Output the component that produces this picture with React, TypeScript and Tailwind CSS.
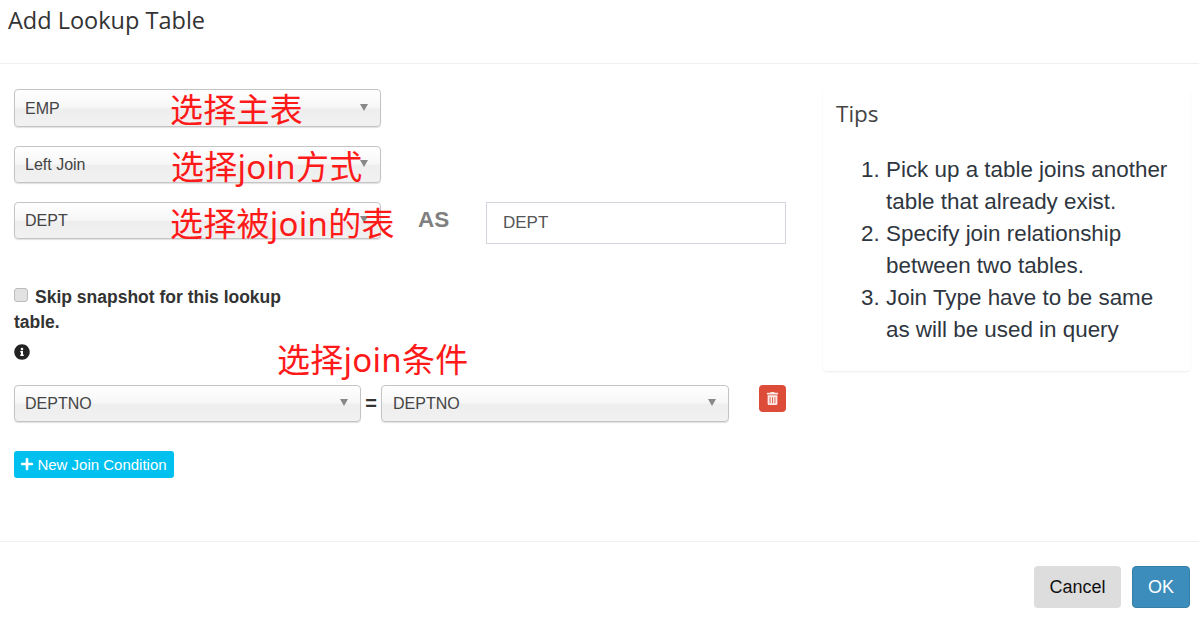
import React from 'react';
import { FaInfoCircle, FaPlus, FaTrashAlt } from 'react-icons/fa';

const SelectBox: React.FC<{ label: string; className: string; note?: string; noteClass?: string }> = ({ label, className, note, noteClass }) => (
  <div className={`relative flex items-center justify-between rounded-[4px] border border-[#c4c4c4] bg-[linear-gradient(to_bottom,#ffffff_0%,#f7f7f7_47%,#eeeeee_53%,#f1f1f1_100%)] shadow-[0_1px_1px_rgba(0,0,0,0.12)] pl-[10px] pr-[12px] text-[16px] text-[#444] ${className}`}>
    <span className="mt-[1px]">{label}</span>
    <span className="-mt-[2px] h-0 w-0 border-x-[4.5px] border-t-[7px] border-x-transparent border-t-[#888]"></span>
    {note && <span className={`absolute whitespace-nowrap text-[#ff1a1a] ${noteClass}`}>{note}</span>}
  </div>
);

const noteFont = "font-['Noto_Sans','Noto_Sans_CJK_SC',sans-serif] text-[33px] leading-none tracking-[0.25px]";

export default function App() {
  return (
    <div className="flex h-[617px] w-[1199px] flex-col overflow-hidden bg-white font-['Liberation_Sans',sans-serif] text-[#333]">
      {/* Header */}
      <div className="h-[64px] flex-none border-b border-[#f0f0f0] pl-2 pt-[4px]">
        <h4 className="font-['Open_Sans',sans-serif] text-[23.5px] leading-[32px] text-[#333]">Add Lookup Table</h4>
      </div>

      {/* Body */}
      <div className="flex h-[478px] flex-none border-b border-[#f0f0f0] pl-[14px] pr-[9px] pt-[25px]">
        <div className="w-[772px] flex-none">
          <SelectBox label="EMP" className="h-[38px] w-[367px]" note="选择主表" noteClass={`left-[155px] top-[3px] ${noteFont}`} />
          <SelectBox label="Left Join" className="mt-[19px] h-[37px] w-[367px]" note="选择join方式" noteClass={`left-[156px] top-[3px] ${noteFont}`} />
          <div className="mt-[19px] flex items-start">
            <SelectBox label="DEPT" className="h-[37px] w-[367px]" note="选择被join的表" noteClass={`left-[155px] top-[4px] ${noteFont}`} />
            <div className="ml-[37px] mt-[5px] w-[68px] text-[22.5px] font-bold leading-[26px] text-[#808080]">AS</div>
            <div className="flex h-[42px] w-[300px] items-center border border-[#d2d6de] pl-[16px] text-[17px] text-[#555]">DEPT</div>
          </div>

          <div className="relative mt-[41px] w-[280px] text-[17.5px] font-bold leading-[25px] text-[#333]">
            <input type="checkbox" readOnly className="mr-[7px] inline-block h-[14px] w-[14px] appearance-none rounded-[3px] border border-[#bbb] bg-[#e2e2e2] align-[1px]" />
            Skip snapshot for this lookup table.
          </div>
          <div className="mt-[8px] flex h-[42px] items-start text-[16px] text-[#222]">
            <FaInfoCircle className="mt-[1px]" />
          </div>

          <div className="flex items-start">
            <SelectBox label="DEPTNO" className="h-[37px] w-[347px]" note="选择join条件" noteClass={`left-[262px] -top-[43px] ${noteFont}`} />
            <div className="w-[20px] pt-[5px] text-center text-[20px] font-bold leading-[26px]">=</div>
            <SelectBox label="DEPTNO" className="h-[37px] w-[348px] pl-[11px]" />
            <button className="ml-[30px] flex h-[27px] w-[27px] items-center justify-center rounded-[4px] bg-[#dd4b39] text-[13px] text-[#fbe9e6]">
              <FaTrashAlt />
            </button>
          </div>

          <button className="mt-[29px] flex h-[27px] w-[160px] items-center justify-center gap-[3px] rounded-[3px] bg-[#00c0ef] pb-[1px] text-[15px] text-white">
            <FaPlus className="-ml-[1px] text-[14px]" />
            <span className="mt-[2px]">New Join Condition</span>
          </button>
        </div>

        {/* Tips card */}
        <div className="ml-[37px] h-[282px] w-[367px] flex-none rounded-[4px] bg-white pl-[13px] pt-[9px] shadow-[0_1px_2px_rgba(0,0,0,0.08)]">
          <h4 className="font-['Open_Sans',sans-serif] text-[22.5px] leading-[32px] text-[#444]">Tips</h4>
          <ol className="mt-[24px] list-decimal pl-[50px] pr-[12px] text-[22.4px] leading-[32px] text-[#2f3640]">
            <li>Pick up a table joins another table that already exist.</li>
            <li>Specify join relationship between two tables.</li>
            <li>Join Type have to be same as will be used in query</li>
          </ol>
        </div>
      </div>

      {/* Footer */}
      <div className="flex flex-1 items-start justify-end gap-[11px] pr-[9px] pt-[24px] text-[18px]">
        <button className="h-[42px] w-[87px] rounded-[4px] bg-[#dddddd] text-[#111]">Cancel</button>
        <button className="h-[42px] w-[58px] rounded-[4px] border border-[#367fa9] bg-[#3c8dbc] text-white">OK</button>
      </div>
    </div>
  );
}
